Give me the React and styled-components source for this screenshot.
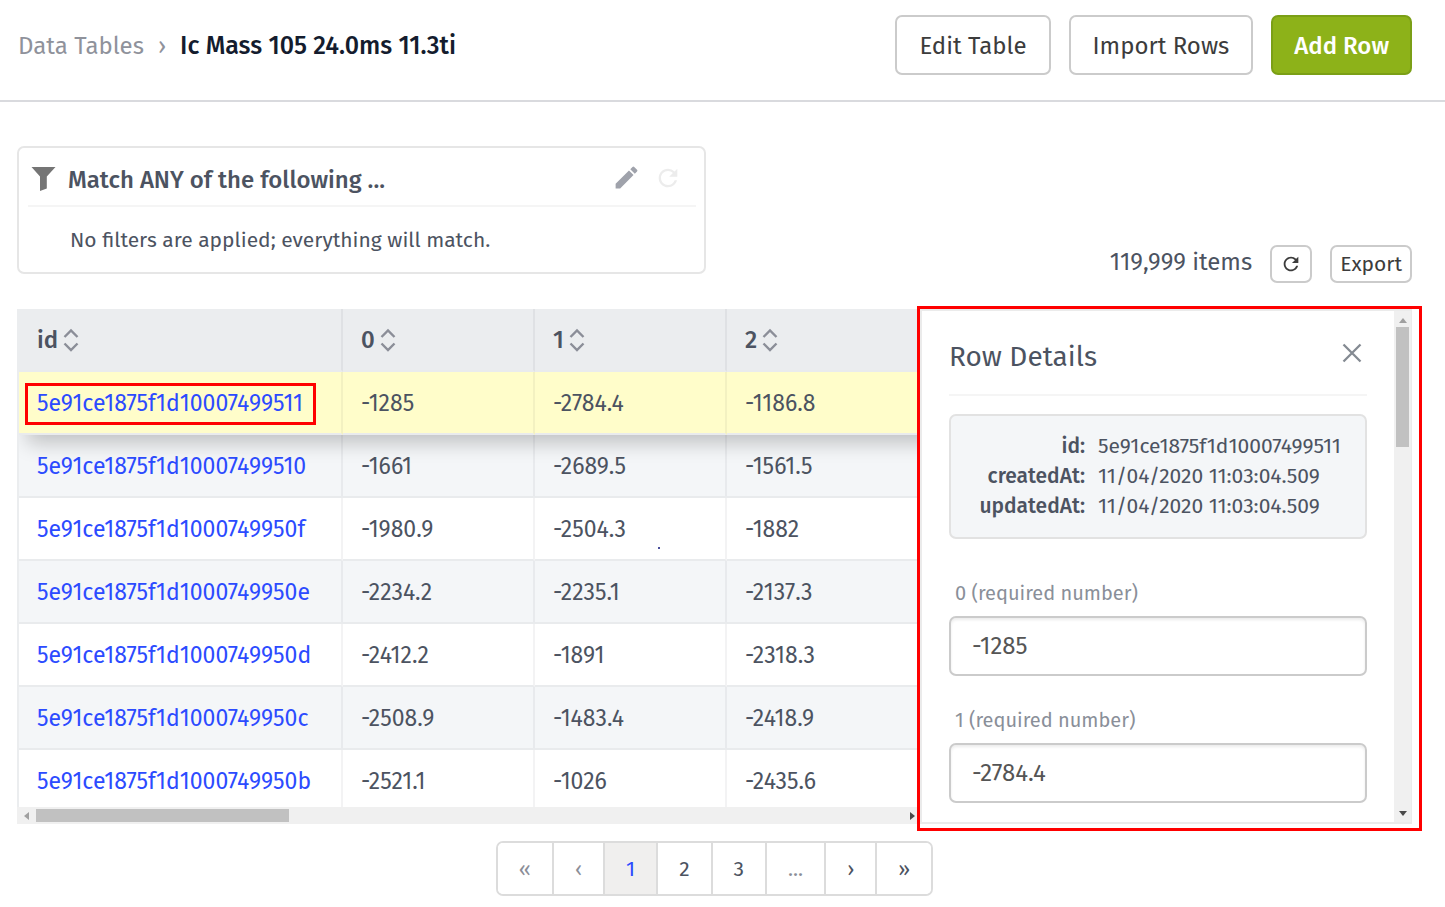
import React, { useState } from 'react';
import styled, { createGlobalStyle } from 'styled-components';
import { MdEdit, MdRefresh } from 'react-icons/md';

const columns = ['id', '0', '1', '2'];

const rows = [
    { id: '5e91ce1875f1d10007499511', values: ['-1285', '-2784.4', '-1186.8'] },
    { id: '5e91ce1875f1d10007499510', values: ['-1661', '-2689.5', '-1561.5'] },
    { id: '5e91ce1875f1d1000749950f', values: ['-1980.9', '-2504.3', '-1882'] },
    { id: '5e91ce1875f1d1000749950e', values: ['-2234.2', '-2235.1', '-2137.3'] },
    { id: '5e91ce1875f1d1000749950d', values: ['-2412.2', '-1891', '-2318.3'] },
    { id: '5e91ce1875f1d1000749950c', values: ['-2508.9', '-1483.4', '-2418.9'] },
    { id: '5e91ce1875f1d1000749950b', values: ['-2521.1', '-1026', '-2435.6'] },
];

const pages = [
    { label: '«', name: 'First page', muted: true },
    { label: '‹', name: 'Previous page', muted: true },
    { label: '1', name: 'Page 1', current: true },
    { label: '2', name: 'Page 2' },
    { label: '3', name: 'Page 3' },
    { label: '...', name: 'More pages', muted: true },
    { label: '›', name: 'Next page' },
    { label: '»', name: 'Last page' },
];

function SortIcon() {
    return (
        <svg width="16" height="24" viewBox="0 0 16 24" fill="none" stroke="#8b8e98" strokeWidth="2.4">
            <path d="M1.5 9 L8 2.5 L14.5 9" />
            <path d="M1.5 15.5 L8 22 L14.5 15.5" />
        </svg>
    );
}

function FunnelIcon() {
    return (
        <svg width="26" height="26" viewBox="0 0 26 26" fill="#757575">
            <path d="M0.5 2 H24.5 L15.8 11.5 V23.6 L9 26 V11.5 Z" />
        </svg>
    );
}

function CloseIcon() {
    return (
        <svg width="20" height="20" viewBox="0 0 20 20" stroke="#848a92" strokeWidth="2.3">
            <path d="M1.5 1.5 L18.5 18.5 M18.5 1.5 L1.5 18.5" />
        </svg>
    );
}

function App() {
    const [first, setFirst] = useState('-1285');
    const [second, setSecond] = useState('-2784.4');

    return (
        <>
            <GlobalStyle />
            <Header>
                <Breadcrumb aria-label="Breadcrumb">
                    <a href="#tables">Data Tables</a>
                    <span>›</span>
                    <h1>Ic Mass 105 24.0ms 11.3ti</h1>
                </Breadcrumb>
                <Actions>
                    <Button type="button">Edit Table</Button>
                    <Button type="button">Import Rows</Button>
                    <Button type="button" $primary>Add Row</Button>
                </Actions>
            </Header>
            <Main>
                <Toolbar>
                    <FilterCard>
                        <FilterHead>
                            <FunnelIcon />
                            <h2>Match ANY of the following ...</h2>
                            <IconButton type="button" aria-label="Edit filters" $color="#9fa2ab">
                                <MdEdit size={29} />
                            </IconButton>
                            <IconButton type="button" aria-label="Reset filters" $color="#ececec">
                                <MdRefresh size={28} />
                            </IconButton>
                        </FilterHead>
                        <p>No filters are applied; everything will match.</p>
                    </FilterCard>
                    <Summary>
                        <span>119,999 items</span>
                        <SmallButton type="button" aria-label="Refresh">
                            <MdRefresh size={22} />
                        </SmallButton>
                        <SmallButton type="button">Export</SmallButton>
                    </Summary>
                </Toolbar>

                <Workspace>
                    <TablePane>
                        <TableView>
                            <Table>
                                <colgroup>
                                    <col className="key" />
                                    <col className="value" />
                                    <col className="value" />
                                    <col />
                                </colgroup>
                                <thead>
                                    <tr>
                                        {columns.map((name) => (
                                            <th key={name} scope="col">
                                                <SortButton type="button">
                                                    {name}
                                                    <SortIcon />
                                                </SortButton>
                                            </th>
                                        ))}
                                    </tr>
                                </thead>
                                <tbody>
                                    {rows.map((row, i) => (
                                        <Row key={row.id} $selected={i === 0}>
                                            <td>
                                                <RowLink href={`#${row.id}`} $marked={i === 0}>{row.id}</RowLink>
                                            </td>
                                            {row.values.map((value, n) => (
                                                <td key={n}>
                                                    {value}
                                                    {i === 2 && n === 1 && <Speck />}
                                                </td>
                                            ))}
                                        </Row>
                                    ))}
                                </tbody>
                            </Table>
                        </TableView>
                        <ScrollX>
                            <Arrow $dir="left" />
                            <ThumbX />
                            <Arrow $dir="right" />
                        </ScrollX>
                    </TablePane>

                    <Details>
                        <DetailsBody>
                            <DetailsHead>
                                <h2>Row Details</h2>
                                <IconButton type="button" aria-label="Close">
                                    <CloseIcon />
                                </IconButton>
                            </DetailsHead>
                            <Meta>
                                <dt>id:</dt>
                                <dd>5e91ce1875f1d10007499511</dd>
                                <dt>createdAt:</dt>
                                <dd>11/04/2020 11:03:04.509</dd>
                                <dt>updatedAt:</dt>
                                <dd>11/04/2020 11:03:04.509</dd>
                            </Meta>
                            <Field>
                                <label htmlFor="field-0">0 (required number)</label>
                                <input
                                    id="field-0"
                                    type="text"
                                    value={first}
                                    onChange={(e) => setFirst(e.target.value)}
                                />
                            </Field>
                            <Field>
                                <label htmlFor="field-1">1 (required number)</label>
                                <input
                                    id="field-1"
                                    type="text"
                                    value={second}
                                    onChange={(e) => setSecond(e.target.value)}
                                />
                            </Field>
                        </DetailsBody>
                        <ScrollY>
                            <Arrow $dir="up" />
                            <ThumbY />
                            <Arrow $dir="down" />
                        </ScrollY>
                    </Details>
                </Workspace>

                <Pagination aria-label="Pages">
                    {pages.map((page) => (
                        <PageButton
                            key={page.name}
                            type="button"
                            aria-label={page.name}
                            $muted={page.muted}
                            $current={page.current}
                        >
                            {page.label}
                        </PageButton>
                    ))}
                </Pagination>
            </Main>
        </>
    );
}

const GlobalStyle = createGlobalStyle`
    * {
        box-sizing: border-box;
    }

    body {
        margin: 0;
        background: #ffffff;
        color: #4c5361;
        font-family: "Fira Sans", "Noto Sans", sans-serif;
        font-size: 23px;
    }

    h1, h2, p, dl, dd {
        margin: 0;
    }

    button, input {
        font-family: inherit;
    }

    svg {
        display: block;
        flex-shrink: 0;
    }
`;

const Header = styled.header`
    display: flex;
    align-items: center;
    justify-content: space-between;
    padding: 15px 33px 25px 18px;
    border-bottom: 2px solid #d9dade;
`;

const Breadcrumb = styled.nav`
    display: flex;
    align-items: center;
    gap: 14px;
    padding-top: 2px;
    font-size: 24px;
    line-height: 32px;
    color: #8f929b;

    a {
        color: inherit;
        text-decoration: none;
    }

    h1 {
        font-size: 25px;
        font-weight: 500;
        color: #141c2e;
    }
`;

const Actions = styled.div`
    display: flex;
    gap: 18px;
`;

const Button = styled.button`
    height: 60px;
    padding: ${(props) => (props.$primary ? '2px 21px 0' : '2px 22px 0')};
    border: 2px solid ${(props) => (props.$primary ? '#7b9f16' : '#cbcbcb')};
    border-radius: 7px;
    background: ${(props) => (props.$primary ? '#8db219' : '#ffffff')};
    color: ${(props) => (props.$primary ? '#ffffff' : '#3c3c3c')};
    font-size: 24px;
    font-weight: ${(props) => (props.$primary ? 500 : 400)};
    cursor: pointer;
`;

const IconButton = styled.button`
    display: flex;
    padding: 0;
    border: none;
    background: none;
    color: ${(props) => props.$color || '#848a92'};
    cursor: pointer;
`;

const Main = styled.main`
    padding: 44px 33px 11px 17px;
`;

const Toolbar = styled.div`
    display: grid;
    grid-template-columns: 1fr 1fr;
    gap: 17px;
    margin-bottom: 26px;
`;

const FilterCard = styled.section`
    margin-bottom: 9px;
    padding: 0 8px 0 9px;
    border: 2px solid #e6e6e6;
    border-radius: 7px;

    p {
        padding: 18px 42px 17px;
        font-size: 21px;
        line-height: 30px;
    }
`;

const FilterHead = styled.div`
    display: flex;
    align-items: center;
    height: 59px;
    padding: 2px 14px 0 3px;
    border-bottom: 2px solid #f5f5f5;

    h2 {
        flex: 1;
        margin: 5px 0 0 11px;
        font-size: 24px;
        font-weight: 500;
    }

    button + button {
        margin-left: 13px;
    }
`;

const Summary = styled.div`
    display: flex;
    align-items: center;
    align-self: end;
    justify-content: flex-end;
    gap: 18px;
    font-size: 24px;

    span {
        padding-bottom: 4px;
    }
`;

const SmallButton = styled.button`
    display: flex;
    align-items: center;
    height: 38px;
    padding: 0 8px;
    border: 2px solid #cbcbcb;
    border-radius: 7px;
    background: #ffffff;
    color: #3c3c3c;
    font-size: 21px;
    cursor: pointer;
`;

const Workspace = styled.div`
    display: flex;
    height: 515px;
`;

const TablePane = styled.section`
    display: flex;
    flex: 1;
    flex-direction: column;
    min-width: 0;
`;

const TableView = styled.div`
    flex: 1;
    min-height: 0;
    overflow: hidden;
    border-left: 2px solid #ebedef;
`;

const Table = styled.table`
    width: calc(100% + 200px);
    table-layout: fixed;
    border-collapse: separate;
    border-spacing: 0;

    col.value {
        width: 192px;
    }

    col.key {
        width: 324px;
    }

    th, td {
        position: relative;
        height: 63px;
        padding: 0 18px;
        border-right: 2px solid rgba(20, 28, 46, 0.05);
        border-bottom: 2px solid #e9ebed;
        text-align: left;
        white-space: nowrap;
    }

    th {
        background: #ebedef;
        border-right-color: #dfe1e4;
    }

    th:last-child, td:last-child {
        border-right: none;
    }
`;

const SortButton = styled.button`
    display: flex;
    align-items: center;
    gap: 5px;
    padding: 0;
    border: none;
    background: none;
    color: #4c5361;
    font-size: 24px;
    font-weight: 500;
    line-height: 30px;
    cursor: pointer;
`;

const Row = styled.tr`
    background: ${(props) => (props.$selected ? '#fffdca' : '#ffffff')};
    ${(props) => props.$selected && `
        position: relative;
        z-index: 1;
        box-shadow: 0 16px 20px -8px rgba(0, 0, 0, 0.22);
    `}

    &:nth-child(even) {
        background: #f4f6f8;
    }
`;

const RowLink = styled.a`
    position: relative;
    display: inline-block;
    line-height: 26px;
    color: #2c4bff;
    text-decoration: none;

    &::after {
        content: ${(props) => (props.$marked ? '""' : 'none')};
        position: absolute;
        inset: -7px -13px -9px -12px;
        border: 3px solid #ff0000;
    }
`;

const Speck = styled.i`
    position: absolute;
    top: 49px;
    left: 123px;
    width: 2px;
    height: 2px;
    background: #4a4f9c;
`;

const ScrollX = styled.div`
    display: flex;
    align-items: center;
    height: 17px;
    padding: 0 5px 0 7px;
    background: #f0f0f0;

    > :last-child {
        margin-left: auto;
    }
`;

const ThumbX = styled.div`
    width: 253px;
    height: 13px;
    margin-left: 7px;
    background: #c1c1c1;
`;

const arrowShapes = {
    left: { box: '0 0 5 8', path: 'M5 0 V8 L0 4 Z', fill: '#a0a0a0' },
    right: { box: '0 0 5 8', path: 'M0 0 V8 L5 4 Z', fill: '#4a4a4a' },
    up: { box: '0 0 8 5', path: 'M0 5 H8 L4 0 Z', fill: '#a0a0a0' },
    down: { box: '0 0 8 5', path: 'M0 0 H8 L4 5 Z', fill: '#4a4a4a' },
};

function Arrow({ $dir }) {
    const shape = arrowShapes[$dir];
    const [, , width, height] = shape.box.split(' ');
    return (
        <svg width={width} height={height} viewBox={shape.box} fill={shape.fill}>
            <path d={shape.path} />
        </svg>
    );
}

const Details = styled.aside`
    position: relative;
    z-index: 2;
    display: flex;
    width: 492px;
    border: 2px solid #ebebeb;
    border-right-width: 1px;
    background: #ffffff;

    &::after {
        content: "";
        position: absolute;
        inset: -5px -11px -9px -5px;
        border: 3px solid #ff0000;
        pointer-events: none;
    }
`;

const DetailsBody = styled.div`
    flex: 1;
    min-width: 0;
    padding: 0 27px;
    overflow: hidden;
`;

const DetailsHead = styled.div`
    display: flex;
    align-items: center;
    justify-content: space-between;
    height: 85px;
    margin-bottom: 18px;
    padding: 0 5px 0 0;
    border-bottom: 2px solid #f5f5f5;

    h2 {
        padding-top: 8px;
        font-size: 28px;
        font-weight: 400;
        line-height: 36px;
    }
`;

const Meta = styled.dl`
    display: grid;
    grid-template-columns: 120px 1fr;
    column-gap: 13px;
    margin-bottom: 39px;
    padding: 15px 10px 16px 14px;
    border: 2px solid #e2e2e2;
    border-radius: 7px;
    background: #f4f6f8;
    font-size: 21px;
    line-height: 30px;

    dt {
        font-weight: 500;
        text-align: right;
    }
`;

const Field = styled.div`
    display: flex;
    flex-direction: column;
    gap: 8px;
    margin-bottom: 29px;

    label {
        padding-left: 6px;
        color: #8a8f99;
        font-size: 20px;
        line-height: 30px;
    }

    input {
        width: 100%;
        height: 60px;
        padding: 0 21px;
        border: 2px solid #cbcbcb;
        border-radius: 7px;
        box-shadow: inset 0 2px 3px rgba(0, 0, 0, 0.08);
        color: #555555;
        font-size: 24px;
    }
`;

const ScrollY = styled.div`
    display: flex;
    flex-direction: column;
    align-items: center;
    width: 17px;
    padding: 7px 0 6px;
    background: #f0f0f0;

    > :last-child {
        margin-top: auto;
    }
`;

const ThumbY = styled.div`
    width: 13px;
    height: 120px;
    margin-top: 4px;
    background: #c1c1c1;
`;

const Pagination = styled.nav`
    display: flex;
    width: fit-content;
    margin: 17px auto 0;
    border: 2px solid #dcdcdc;
    border-radius: 7px;
    overflow: hidden;
`;

const PageButton = styled.button`
    height: 51px;
    padding: 0 21px;
    border: none;
    border-right: 2px solid #dcdcdc;
    background: ${(props) => (props.$current ? '#f0efee' : '#ffffff')};
    color: ${(props) => (props.$current ? '#2c4bff' : props.$muted ? '#8b8e98' : '#4c5361')};
    font-size: 21px;
    cursor: pointer;

    &:last-child {
        border-right: none;
    }
`;

export default App;
